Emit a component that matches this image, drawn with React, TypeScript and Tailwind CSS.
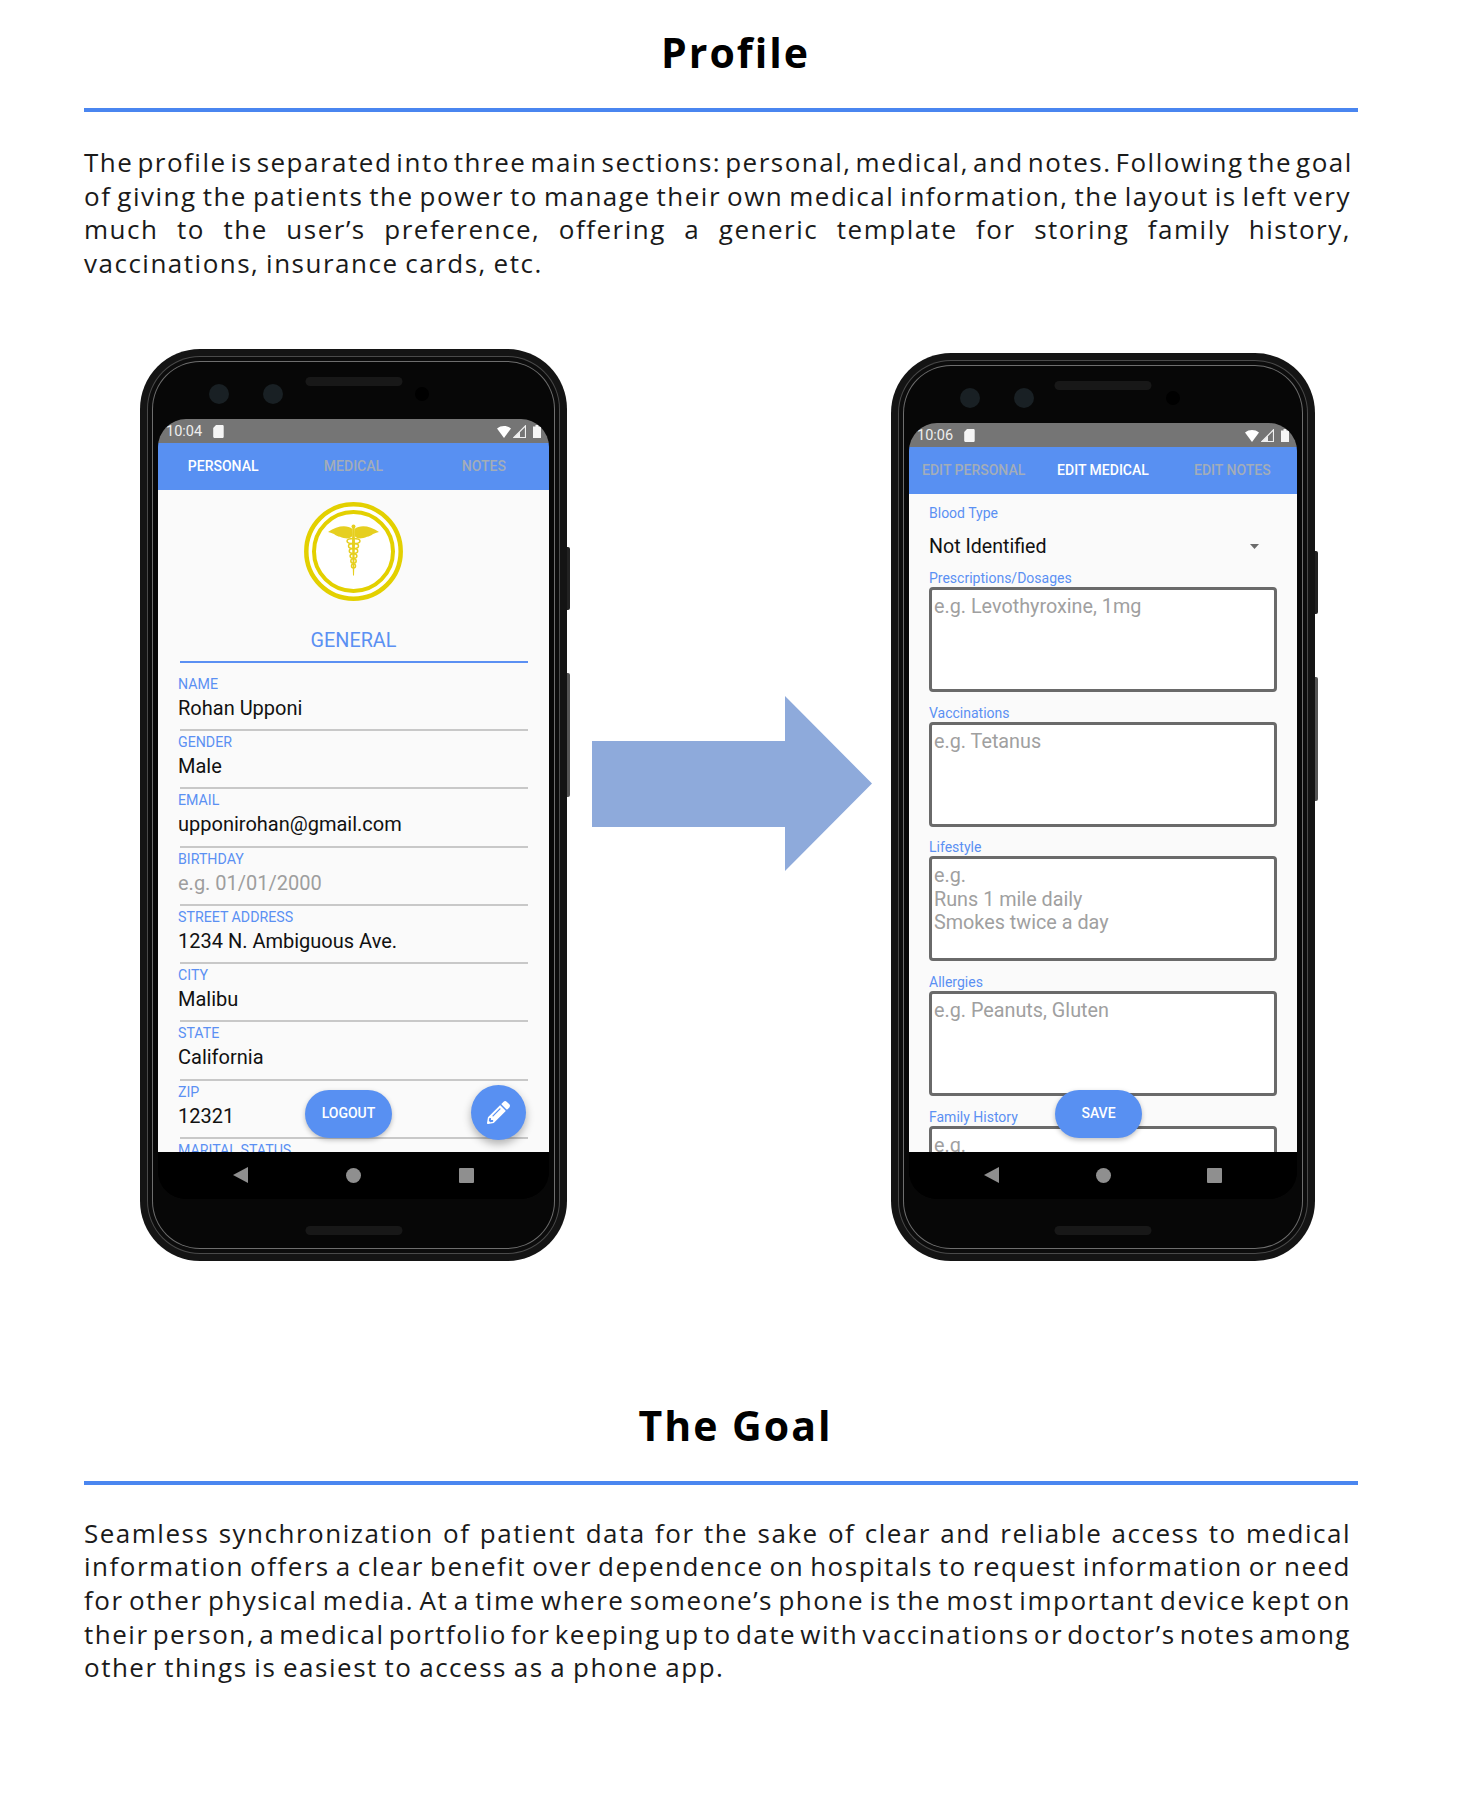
import { FC, ReactNode } from 'react';
import { FaPencilAlt } from 'react-icons/fa';

const bodyFont = "font-['Open_Sans',sans-serif]";
const roboto = "font-['Roboto',sans-serif]";

const Lines: FC<{ lines: string[]; top: string }> = ({ lines, top }) => (
    <div className={`${bodyFont} ${top} w-[1267px] text-[26px] leading-[33.6px] tracking-[1.5px] text-[#1a1a1a]`}>
        {lines.map((line, i) => (
            <div key={i} className={i < lines.length - 1 ? '[text-align-last:justify] [word-spacing:-4.2px] whitespace-nowrap' : '[word-spacing:-1.5px] whitespace-nowrap'}>
                {line}
            </div>
        ))}
    </div>
);

const Heading: FC<{ title: string }> = ({ title }) => (
    <>
        <h1 className={`${bodyFont} w-[1303px] text-center text-[41px] leading-[52px] font-bold tracking-[2px] text-black`}>{title}</h1>
        <div className="mt-[30px] h-[4px] w-[1274px] bg-[#4a86f0]" />
    </>
);

const StatusBar: FC<{ time: string }> = ({ time }) => (
    <div className={`${roboto} flex h-[24px] items-center bg-[#757575] pt-[2px] pr-[8px] pl-[8px] text-[14.5px] text-[#eeeeee]`}>
        <span className="w-[47px]">{time}</span>
        <svg width="11" height="13" viewBox="0 0 11 13"><path d="M3 0h6.500a1.200 1.200 0 0 1 1.200 1.200v10.600a1.200 1.200 0 0 1-1.200 1.200H1.300A1.200 1.200 0 0 1 .2 11.800V3z" fill="#f5f5f5" /></svg>
        <div className="ml-auto flex items-center gap-[2px]">
            <svg width="14" height="12" viewBox="0 0 14 12"><path d="M0 2.500C4 -.8 10 -.8 14 2.500L7 12z" fill="#ffffff" /></svg>
            <svg width="13" height="13" viewBox="0 0 13 13"><path d="M12.500.8v11.700H.8z" fill="none" stroke="#f0f0f0" strokeWidth="1.200" /><path d="M7 6.500v6H1z" fill="#f0f0f0" /></svg>
            <svg className="ml-[5px]" width="8" height="13" viewBox="0 0 8 13"><path d="M2.500 0h3v1.500H8V13H0V1.500h2.500z" fill="#f5f5f5" /></svg>
        </div>
    </div>
);

const Tabs: FC<{ tabs: string[]; active: number }> = ({ tabs, active }) => (
    <div className={`${roboto} grid h-[47px] grid-cols-3 items-center bg-[#5890f2] pt-[1px] text-center text-[14px] font-medium`}>
        {tabs.map((tab, i) => (
            <span key={tab} className={i === active ? 'text-white' : 'text-[#a3adb8]'}>{tab}</span>
        ))}
    </div>
);

const NavBar: FC = () => (
    <div className="flex h-[47px] items-center justify-between bg-black px-[75px]">
        <svg width="15" height="16" viewBox="0 0 15 16"><path d="M15 0v16L0 8z" fill="#8f8f8f" /></svg>
        <div className="h-[15px] w-[15px] rounded-full bg-[#8f8f8f]" />
        <div className="h-[15px] w-[15px] rounded-[1px] bg-[#8f8f8f]" />
    </div>
);

const PhoneFrame: FC<{ width: string; children: ReactNode }> = ({ width, children }) => (
    <div className={`relative shrink-0 ${width}`}>
        {/* side buttons */}
        <div className="absolute top-[198px] right-[-3px] h-[63px] w-[4px] rounded-r-[2px] bg-[#222222]" />
        <div className="absolute top-[324px] right-[-3px] h-[124px] w-[4px] rounded-r-[2px] bg-[#555555]" />

        <div className="relative rounded-[60px] bg-[#141414] p-[7px]">
            <div className="rounded-[53px] bg-[#4a4a4a] p-px">
                <div className="rounded-[52px] bg-[#0c0c0c] p-[4px]">
                    <div className="rounded-[48px] bg-[#6e6e6e] p-px">
                        <div className="rounded-[47px] bg-[#070707] px-[5px] pt-[57px] pb-[49px]">
                            {children}
                        </div>
                    </div>
                </div>
            </div>
            {/* cameras and speakers sit on the bezel */}
            <div className="absolute top-[35px] left-[69px] h-[20px] w-[20px] rounded-full bg-[#192024]" />
            <div className="absolute top-[35px] left-[123px] h-[20px] w-[20px] rounded-full bg-[#192024]" />
            <div className="absolute top-[28px] left-1/2 h-[9px] w-[97px] -translate-x-1/2 rounded-full bg-[#181818]" />
            <div className="absolute top-[38px] left-[275px] h-[14px] w-[14px] rounded-full bg-black" />
            <div className="absolute bottom-[26px] left-1/2 h-[9px] w-[97px] -translate-x-1/2 rounded-full bg-[#181818]" />
        </div>
    </div>
);

const Caduceus: FC = () => (
    <svg width="99" height="99" viewBox="0 0 99 99">
        <circle cx="49.500" cy="49.500" r="47.200" fill="#ffffff" stroke="#e3d000" strokeWidth="4.500" />
        <circle cx="49.500" cy="49.500" r="39.500" fill="none" stroke="#e3d000" strokeWidth="4" />
        <g fill="#e6cf1f" stroke="none">
            <path d="M48.500 27C43 22.500 33 23.500 24 30c3 .5 4 1.500 6 2 1.500 1.500 4 2.500 6 2.800 3 1.500 6.500 1.800 9 1.500 2.500-.6 3.500-2.500 3.500-3.500z" />
            <path d="M50.500 27C56 22.500 66 23.500 75 30c-3 .5-4 1.500-6 2-1.500 1.500-4 2.500-6 2.800-3 1.500-6.500 1.800-9 1.500-2.500-.6-3.500-2.500-3.500-3.500z" />
            <path d="M48.400 24h2.200l.4 18-1 31.500h-1l-1-31.500z" />
            <circle cx="49.500" cy="24.500" r="2" />
        </g>
        <g fill="none" stroke="#e6cf1f" strokeWidth="1.500">
            <ellipse cx="49.500" cy="39" rx="6.500" ry="2.600" />
            <ellipse cx="49.500" cy="44" rx="5" ry="2.500" />
            <ellipse cx="49.500" cy="49" rx="4.200" ry="2.400" />
            <ellipse cx="49.500" cy="54" rx="3.400" ry="2.300" />
            <ellipse cx="49.500" cy="59" rx="2.700" ry="2.200" />
            <ellipse cx="49.500" cy="64" rx="2" ry="2" />
        </g>
    </svg>
);

const personal = [
    { label: 'NAME', value: 'Rohan Upponi' },
    { label: 'GENDER', value: 'Male' },
    { label: 'EMAIL', value: 'upponirohan@gmail.com' },
    { label: 'BIRTHDAY', value: 'e.g. 01/01/2000', empty: true },
    { label: 'STREET ADDRESS', value: '1234 N. Ambiguous Ave.' },
    { label: 'CITY', value: 'Malibu' },
    { label: 'STATE', value: 'California' },
    { label: 'ZIP', value: '12321' },
    { label: 'MARITAL STATUS', value: '' },
];

const medical = [
    { label: 'Prescriptions/Dosages', hint: 'e.g. Levothyroxine, 1mg' },
    { label: 'Vaccinations', hint: 'e.g. Tetanus' },
    { label: 'Lifestyle', hint: 'e.g.\nRuns 1 mile daily\nSmokes twice a day' },
    { label: 'Allergies', hint: 'e.g. Peanuts, Gluten' },
    { label: 'Family History', hint: 'e.g.' },
];

const PersonalScreen: FC = () => (
    <div className={`${roboto} overflow-hidden rounded-[28px] bg-black`}>
        <StatusBar time="10:04" />
        <Tabs tabs={['PERSONAL', 'MEDICAL', 'NOTES']} active={0} />
        <div className="relative h-[662px] overflow-hidden bg-[#fafafa]">
            <div className="flex justify-center pt-[12px]"><Caduceus /></div>
            <div className="mt-[28px] text-center text-[19.8px] leading-[24px] text-[#5b90f3]">GENERAL</div>
            <div className="mt-[8px] mr-[21px] ml-[22px] h-[2px] bg-[#5b90f3]" />
            <div className="mt-[10px] mr-[21px] ml-[22px]">
                {personal.map((row) => (
                    <div key={row.label} className="h-[58.25px] border-b-[2px] border-[#c8c8c8] pt-[3px]">
                        <div className="-ml-[2px] text-[14.2px] leading-[16px] text-[#5b90f3]">{row.label}</div>
                        <div className={`-ml-[2px] mt-[3px] text-[20px] leading-[26px] ${row.empty ? 'text-[#9e9e9e]' : 'text-[#111111]'}`}>{row.value}</div>
                    </div>
                ))}
            </div>
            <button className="absolute bottom-[14px] left-[147px] h-[48px] w-[87px] rounded-full bg-[#5890f2] text-[14px] font-medium text-white shadow-[0_2px_5px_rgba(0,0,0,0.25)]">LOGOUT</button>
            <button className="absolute bottom-[12px] left-[313px] flex h-[55px] w-[55px] items-center justify-center rounded-full bg-[#5890f2] text-white shadow-[0_4px_8px_rgba(0,0,0,0.3)]">
                <FaPencilAlt size={23} />
            </button>
        </div>
        <NavBar />
    </div>
);

const MedicalScreen: FC = () => (
    <div className={`${roboto} overflow-hidden rounded-[28px] bg-black`}>
        <StatusBar time="10:06" />
        <Tabs tabs={['EDIT PERSONAL', 'EDIT MEDICAL', 'EDIT NOTES']} active={1} />
        <div className="relative h-[658px] overflow-hidden bg-[#fafafa] px-[20px]">
            <div className="pt-[11px] text-[14px] leading-[16px] text-[#5b90f3]">Blood Type</div>
            <div className="flex h-[49px] items-center justify-between pt-[3px] pr-[18px] text-[19.6px] text-[#111111]">
                Not Identified
                <svg width="9" height="5" viewBox="0 0 9 5"><path d="M0 0h9L4.500 5z" fill="#6b6b6b" /></svg>
            </div>
            {medical.map((item) => (
                <div key={item.label} className="h-[134.75px]">
                    <div className="text-[14px] leading-[16px] text-[#5b90f3]">{item.label}</div>
                    <div className="mt-[1px] h-[105px] rounded-[4px] border-[3px] border-[#6a6a6a] bg-white px-[2px] pt-[5px] text-[19.8px] leading-[23.5px] whitespace-pre-line text-[#a0a0a0]">
                        {item.hint}
                    </div>
                </div>
            ))}
            <button className="absolute bottom-[14px] left-[146px] h-[48px] w-[87px] rounded-full bg-[#5890f2] text-[14px] font-medium text-white shadow-[0_2px_5px_rgba(0,0,0,0.25)]">SAVE</button>
        </div>
        <NavBar />
    </div>
);

const App: FC = () => {
    return (
        <div className="min-h-[1803px] w-[1471px] bg-white pt-[26px] pl-[84px]">
            <Heading title="Profile" />
            <Lines
                top="mt-[34px]"
                lines={[
                    'The profile is separated into three main sections: personal, medical, and notes. Following the goal',
                    'of giving the patients the power to manage their own medical information, the layout is left very',
                    'much to the user’s preference, offering a generic template for storing family history,',
                    'vaccinations, insurance cards, etc.',
                ]}
            />

            <div className="mt-[68.500px] flex items-start">
                <div className="ml-[56px]">
                    <PhoneFrame width="w-[427px]">
                        <PersonalScreen />
                    </PhoneFrame>
                </div>
                {/* Arrow */}
                <svg className="mt-[347px] ml-[25px] shrink-0" width="280" height="175" viewBox="0 0 280 175">
                    <path d="M0 45h193V0l87 87.500-87 87.500v-44H0z" fill="#8eaadb" />
                </svg>
                <div className="mt-[4px] ml-[19px]">
                    <PhoneFrame width="w-[424px]">
                        <MedicalScreen />
                    </PhoneFrame>
                </div>
            </div>

            <div className="mt-[138px]">
                <Heading title="The Goal" />
            </div>
            <Lines
                top="mt-[32px]"
                lines={[
                    'Seamless synchronization of patient data for the sake of clear and reliable access to medical',
                    'information offers a clear benefit over dependence on hospitals to request information or need',
                    'for other physical media. At a time where someone’s phone is the most important device kept on',
                    'their person, a medical portfolio for keeping up to date with vaccinations or doctor’s notes among',
                    'other things is easiest to access as a phone app.',
                ]}
            />
        </div>
    );
};

export default App;
